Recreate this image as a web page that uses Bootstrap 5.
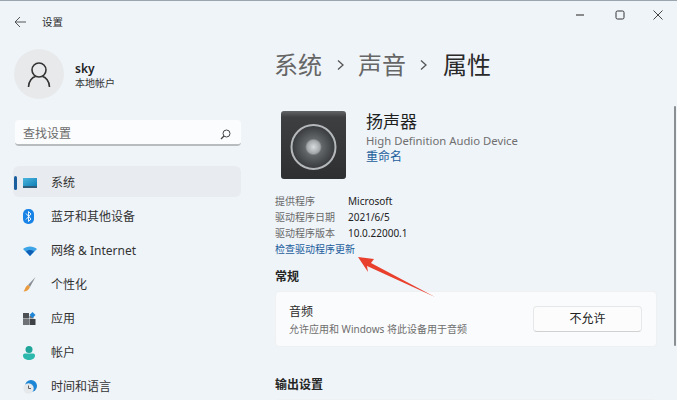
<!DOCTYPE html>
<html lang="zh-CN">
<head>
<meta charset="utf-8">
<title>设置</title>
<link href="https://cdn.jsdelivr.net/npm/bootstrap@5.3.0/dist/css/bootstrap.min.css" rel="stylesheet">
<style>
html,body{height:400px;overflow:hidden}
body{background:#eff4f9;color:#2b2b2b;font-family:"Noto Sans","Noto Sans CJK SC",sans-serif;font-size:12px;line-height:1}
.win{width:677px;height:400px;border-top:1px solid #9aa5ae;overflow:hidden}
.side{width:275px;flex:none;padding-left:14px}
.topline{height:40px;font-size:10.500px;padding-top:2px}
.backbtn{width:13px;margin-right:15px}
.avatar{width:50px;height:50px;background:#e8e9ea}
.who{height:50px;margin-top:8px}
.who-name{font-size:12px;font-weight:600;color:#222;margin:3px 0 3px -1px}
.who-sub{font-size:10px;color:#333;margin-left:-1px}
.finder{width:226px;height:26px;margin:21px 0 20px 1px;background:#fbfcfd;border-bottom:2px solid #b9bcbe;padding:4px 10px 0 8px;color:#6b6b6b;font-size:12px}
.menu-row{width:228px;height:31px;margin:0 0 3px -1px;font-size:12px;color:#333;padding-top:2px}
.menu-row.on{background:#e8ecf0}
.ind{width:3px;height:14px;background:#1b5f9e;margin-left:1px}
.ico-slot{width:20px;margin:0 8px 0 6px}
.off .ico-slot{margin-left:10px}
.content{flex:1;min-width:0}
.winbtns{height:28px;padding-right:13px;gap:24px}
.crumb{font-size:24px;color:#666;margin:20px 0 0 -1px;height:32px}
.crumb b{font-weight:400;color:#2a2a2a}
.crumb-sep{margin:0 13px 0 14px}
.crumb-sep.second{margin:0 15px 0 13px}
.speaker{margin:30px 0 0 6px;gap:20px}
.spk-name{font-size:17px;color:#1e1e1e;margin:2px 0 5px}
.spk-sub{font-size:11.300px;color:#6f6f6f;margin-bottom:5px}
.linky{color:#1c5d9c;text-decoration:none}
.spk-link{font-size:12px}
.facts{margin-top:14px;font-size:10px}
.fact-row{height:16px}
.fact-key{width:73px;color:#6a6a6a}
.fact-val{color:#222}
.head-sm{font-size:12px;font-weight:600;color:#252525}
.general-h{margin-top:14px}
.panel{width:382px;height:56px;margin-top:8px;background:#fafbfc;padding:0 14px 0 13px;border:1px solid #eef0f2}
.panel-txt{padding-top:2px}
.panel-t{font-size:12px;color:#2a2a2a;margin-bottom:6px}
.panel-d{font-size:10px;color:#6e6e6e}
.allow{width:109px;height:26px;background:#fcfcfc;border:1px solid #e6e7e8;border-bottom-color:#d0d1d2;font-size:12px;color:#222;padding:0}
.output-h{margin-top:32px}
.scroller{position:absolute;left:674px;top:105px;width:2px;height:240px;background:#8b8f93;border-radius:1px}
.pointer{position:absolute;left:0;top:0;pointer-events:none}
</style>
</head>
<body>
<div class="win d-flex position-relative">
  <aside class="side">
    <div class="topline d-flex align-items-center">
      <svg class="backbtn" width="13" height="12" viewBox="0 0 13 12"><path d="M6 1 1 6l5 5M1 6h11" fill="none" stroke="#555" stroke-width="1"/></svg>
      <span>设置</span>
    </div>
    <div class="who d-flex align-items-center gap-2">
      <div class="avatar rounded-circle d-flex align-items-center justify-content-center me-1">
        <svg width="24" height="27" viewBox="0 0 24 27"><circle cx="12" cy="9" r="7" fill="none" stroke="#333" stroke-width="1.600"/><path d="M1.500 26c0-6 4-10 7-10.500M22.500 26c0-6-4-10-7-10.500" fill="none" stroke="#333" stroke-width="1.600"/></svg>
      </div>
      <div>
        <div class="who-name">sky</div>
        <div class="who-sub">本地帐户</div>
      </div>
    </div>
    <div class="finder rounded-1 d-flex align-items-center justify-content-between">
      <span>查找设置</span>
      <svg width="11" height="11" viewBox="0 0 11 11"><circle cx="6.500" cy="4.500" r="3.500" fill="none" stroke="#444"/><path d="M4 7 1 10" stroke="#444" stroke-width="1.200"/></svg>
    </div>
    <nav>
      <div class="menu-row on rounded-2 d-flex align-items-center">
        <span class="ind rounded-pill"></span>
        <span class="ico-slot d-flex"><svg width="14" height="10" viewBox="0 0 14 10"><defs><linearGradient id="s" x1="0" y1="0" x2="1" y2="1"><stop offset="0" stop-color="#4bb6de"/><stop offset="1" stop-color="#0f7eb5"/></linearGradient></defs><rect width="14" height="8" fill="url(#s)"/><rect y="8" width="14" height="2" fill="#2f5d7c"/></svg></span>
        <span>系统</span>
      </div>
      <div class="menu-row off d-flex align-items-center">
        <span class="ico-slot d-flex"><svg width="11" height="15" viewBox="0 0 11 15"><rect width="11" height="15" rx="5" fill="#1a84e6"/><path d="M3 4.500 8 10l-2.500 2.500v-10L8 5 3 10.500" fill="none" stroke="#fff" stroke-width=".9"/></svg></span>
        <span>蓝牙和其他设备</span>
      </div>
      <div class="menu-row off d-flex align-items-center">
        <span class="ico-slot d-flex"><svg width="14" height="10" viewBox="0 0 14 10"><path d="M0 3C3.500-.5 10.500-.5 14 3L7 10Z" fill="#3da4e8"/><path d="M3 5.500c2.200-2 5.800-2 8 0L7 10Z" fill="#0f5fb5"/></svg></span>
        <span>网络 &amp; Internet</span>
      </div>
      <div class="menu-row off d-flex align-items-center">
        <span class="ico-slot d-flex"><svg width="13" height="15" viewBox="0 0 13 15"><path d="M12.500 0 5 8l2 2Z" fill="#8a8f96"/><path d="M5 8l2 2c-1 3-4 4.500-6.500 4.500C2 13 2.500 9 5 8Z" fill="#e89a3c"/></svg></span>
        <span>个性化</span>
      </div>
      <div class="menu-row off d-flex align-items-center">
        <span class="ico-slot d-flex"><svg width="13" height="13" viewBox="0 0 13 13"><rect y="1" width="6" height="5.500" fill="#4c5055"/><rect y="7" width="6" height="6" fill="#6e7277"/><rect x="6.500" y="7" width="6" height="6" fill="#3e4246"/><rect x="6.500" y="4" width="4" height="2.500" fill="#6e7277"/><path d="M9.500 0 12.500 3 9.500 6 6.500 3Z" fill="#1f86d6"/></svg></span>
        <span>应用</span>
      </div>
      <div class="menu-row off d-flex align-items-center">
        <span class="ico-slot d-flex"><svg width="12" height="14" viewBox="0 0 12 14"><circle cx="6" cy="3.500" r="3.500" fill="#1fa59a"/><path d="M0 9.500C0 8 1 7.500 2.500 7.500h7C11 7.500 12 8 12 9.500 12 12.500 9 14 6 14S0 12.500 0 9.500Z" fill="#2cb8ac"/></svg></span>
        <span>帐户</span>
      </div>
      <div class="menu-row off d-flex align-items-center">
        <span class="ico-slot d-flex"><svg width="14" height="14" viewBox="0 0 14 14"><circle cx="8" cy="6" r="6" fill="#1c86d6"/><circle cx="5.500" cy="8.500" r="5.200" fill="#e6e9ec"/><path d="M5.500 5.500v3h2.500" fill="none" stroke="#555" stroke-width=".9"/></svg></span>
        <span>时间和语言</span>
      </div>
    </nav>
  </aside>

  <main class="content">
    <div class="winbtns d-flex align-items-center justify-content-end">
      <svg width="16" height="12" viewBox="0 0 16 12"><path d="M4 6h8" stroke="#444" stroke-width="1.200"/></svg>
      <svg width="16" height="12" viewBox="0 0 16 12"><rect x="4" y="2" width="8" height="8" rx="1.500" fill="none" stroke="#333"/></svg>
      <svg width="12" height="12" viewBox="0 0 12 12"><path d="M1.500 1.500l9 9M10.500 1.500l-9 9" stroke="#444"/></svg>
    </div>
    <div class="crumb d-flex align-items-center">
      <span>系统</span>
      <svg class="crumb-sep" width="9" height="12" viewBox="0 0 9 12"><path d="M2 1.500 7 6l-5 4.500" fill="none" stroke="#555" stroke-width="1.300"/></svg>
      <span>声音</span>
      <svg class="crumb-sep second" width="9" height="12" viewBox="0 0 9 12"><path d="M2 1.500 7 6l-5 4.500" fill="none" stroke="#555" stroke-width="1.300"/></svg>
      <b>属性</b>
    </div>
    <section class="speaker d-flex">
      <svg width="65" height="68" viewBox="0 0 65 68">
        <defs>
          <radialGradient id="c"><stop offset="0" stop-color="#d8dcde"/><stop offset=".3" stop-color="#a2a6a9"/><stop offset=".38" stop-color="#63676a"/><stop offset="1" stop-color="#36383b"/></radialGradient>
          <linearGradient id="b" x1="0" y1="0" x2="0" y2="1"><stop offset="0" stop-color="#626466"/><stop offset=".09" stop-color="#3e3f41"/><stop offset="1" stop-color="#2e2f31"/></linearGradient>
        </defs>
        <rect width="65" height="68" rx="3" fill="url(#b)"/>
        <circle cx="32.500" cy="36" r="22" fill="url(#c)" stroke="#b5b8ba" stroke-width="2"/>
      </svg>
      <div>
        <div class="spk-name">扬声器</div>
        <div class="spk-sub">High Definition Audio Device</div>
        <a class="linky spk-link" href="#">重命名</a>
      </div>
    </section>
    <section class="facts">
      <div class="fact-row d-flex align-items-center"><span class="fact-key">提供程序</span><span class="fact-val">Microsoft</span></div>
      <div class="fact-row d-flex align-items-center"><span class="fact-key">驱动程序日期</span><span class="fact-val">2021/6/5</span></div>
      <div class="fact-row d-flex align-items-center"><span class="fact-key">驱动程序版本</span><span class="fact-val">10.0.22000.1</span></div>
      <div class="fact-row d-flex align-items-center"><a class="linky" href="#">检查驱动程序更新</a></div>
    </section>
    <div class="head-sm general-h">常规</div>
    <section class="panel rounded-1 d-flex align-items-center justify-content-between">
      <div class="panel-txt">
        <div class="panel-t">音频</div>
        <div class="panel-d">允许应用和 Windows 将此设备用于音频</div>
      </div>
      <button type="button" class="btn allow rounded-1">不允许</button>
    </section>
    <div class="head-sm output-h">输出设置</div>
    <section class="panel rounded-1 mt-2"></section>
  </main>

  <div class="scroller"></div>
  <svg class="pointer" width="677" height="400" viewBox="0 0 677 400"><polygon points="358,256 374,258 371,262 435,296 367,265 368,271" fill="#e9402e"/></svg>
</div>
</body>
</html>
